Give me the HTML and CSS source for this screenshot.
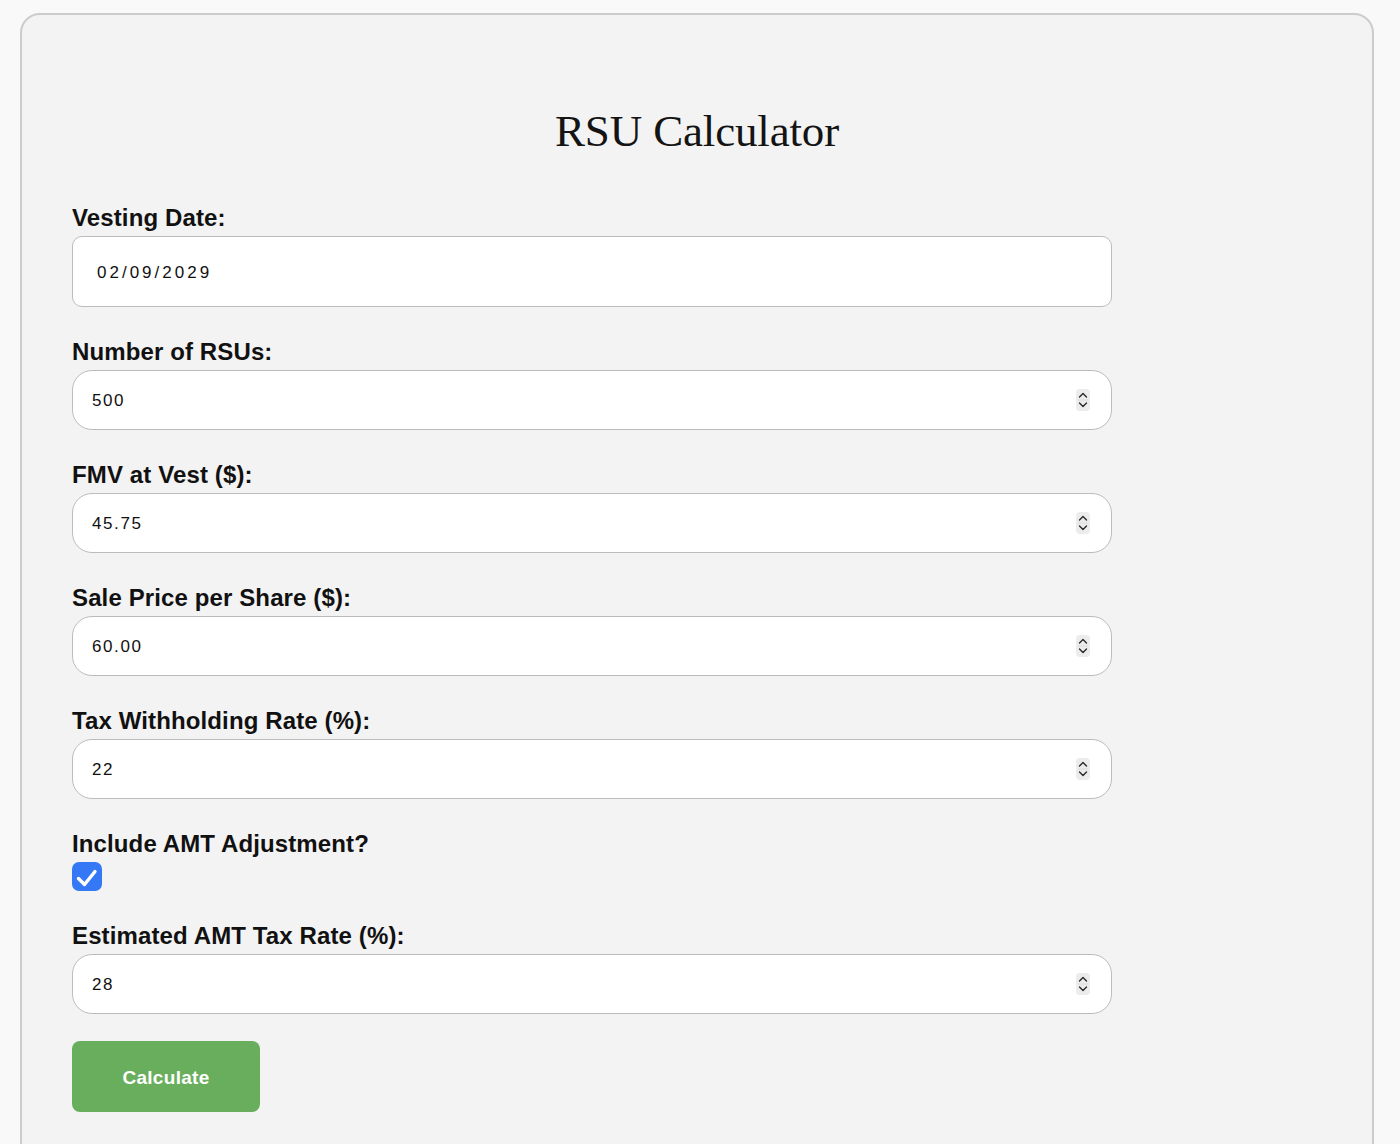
FILE: index.html
```html
<!DOCTYPE html>
<html lang="en">
<head>
<meta charset="utf-8">
<title>RSU Calculator</title>
<link rel="stylesheet" href="styles.css">
</head>
<body>
<div class="card">
  <h1>RSU Calculator</h1>
  <form class="calc" onsubmit="return false">
    <div class="field">
      <label for="vestDate">Vesting Date:</label>
      <input class="box date" id="vestDate" type="text" value="02/09/2029">
    </div>
    <div class="field">
      <label for="rsuCount">Number of RSUs:</label>
      <div class="num">
        <input class="box" id="rsuCount" type="number" value="500">
        <svg class="spin" width="14" height="22" viewBox="0 0 14 22"><rect width="14" height="22" rx="4" fill="#ececec"/><line x1="2" y1="11" x2="12" y2="11" stroke="#dcdcdc"/><path d="M3.5 8 L7 4.5 L10.5 8 M3.5 14 L7 17.5 L10.5 14" fill="none" stroke="#2a2a2a" stroke-width="1.4" stroke-linecap="round" stroke-linejoin="round"/></svg>
      </div>
    </div>
    <div class="field">
      <label for="fmv">FMV at Vest ($):</label>
      <div class="num">
        <input class="box" id="fmv" type="number" value="45.75">
        <svg class="spin" width="14" height="22" viewBox="0 0 14 22"><rect width="14" height="22" rx="4" fill="#ececec"/><line x1="2" y1="11" x2="12" y2="11" stroke="#dcdcdc"/><path d="M3.5 8 L7 4.5 L10.5 8 M3.5 14 L7 17.5 L10.5 14" fill="none" stroke="#2a2a2a" stroke-width="1.4" stroke-linecap="round" stroke-linejoin="round"/></svg>
      </div>
    </div>
    <div class="field">
      <label for="salePrice">Sale Price per Share ($):</label>
      <div class="num">
        <input class="box" id="salePrice" type="number" value="60.00">
        <svg class="spin" width="14" height="22" viewBox="0 0 14 22"><rect width="14" height="22" rx="4" fill="#ececec"/><line x1="2" y1="11" x2="12" y2="11" stroke="#dcdcdc"/><path d="M3.5 8 L7 4.5 L10.5 8 M3.5 14 L7 17.5 L10.5 14" fill="none" stroke="#2a2a2a" stroke-width="1.4" stroke-linecap="round" stroke-linejoin="round"/></svg>
      </div>
    </div>
    <div class="field">
      <label for="taxRate">Tax Withholding Rate (%):</label>
      <div class="num">
        <input class="box" id="taxRate" type="number" value="22">
        <svg class="spin" width="14" height="22" viewBox="0 0 14 22"><rect width="14" height="22" rx="4" fill="#ececec"/><line x1="2" y1="11" x2="12" y2="11" stroke="#dcdcdc"/><path d="M3.5 8 L7 4.5 L10.5 8 M3.5 14 L7 17.5 L10.5 14" fill="none" stroke="#2a2a2a" stroke-width="1.4" stroke-linecap="round" stroke-linejoin="round"/></svg>
      </div>
    </div>
    <div class="field">
      <label for="amt">Include AMT Adjustment?</label>
      <span class="check">
        <input id="amt" type="checkbox" checked>
        <svg class="tick" width="30" height="29" viewBox="0 0 30 29"><path d="M6.5 16.5 L12.5 22.5 L23 9.5" fill="none" stroke="#fff" stroke-width="3.4" stroke-linecap="round" stroke-linejoin="round"/></svg>
      </span>
    </div>
    <div class="field">
      <label for="amtRate">Estimated AMT Tax Rate (%):</label>
      <div class="num">
        <input class="box" id="amtRate" type="number" value="28">
        <svg class="spin" width="14" height="22" viewBox="0 0 14 22"><rect width="14" height="22" rx="4" fill="#ececec"/><line x1="2" y1="11" x2="12" y2="11" stroke="#dcdcdc"/><path d="M3.5 8 L7 4.5 L10.5 8 M3.5 14 L7 17.5 L10.5 14" fill="none" stroke="#2a2a2a" stroke-width="1.4" stroke-linecap="round" stroke-linejoin="round"/></svg>
      </div>
    </div>
    <button class="btn" type="submit">Calculate</button>
  </form>
</div>
</body>
</html>
```

FILE: styles.css
```css
body {
  margin: 0;
  background: #f9f9f9;
  font-family: "Liberation Sans", Arial, sans-serif;
  color: #111;
}

.card {
  margin: 13px 26px 0 20px;
  padding: 50px 50px 60px;
  background: #f3f3f3;
  border: 2px solid #cccccc;
  border-radius: 20px;
}

h1 {
  margin: 39px 0 44px;
  text-align: center;
  font-family: "Liberation Serif", "Times New Roman", serif;
  font-weight: normal;
  font-size: 45px;
  line-height: 54px;
  letter-spacing: -0.15px;
  color: #141414;
}

.calc {
  width: 1040px;
}

.field {
  margin-bottom: 29px;
}
.field:last-of-type {
  margin-bottom: 27px;
}

.field label {
  display: block;
  padding-top: 2px;
  margin-bottom: 4px;
  font-size: 24px;
  line-height: 28px;
  font-weight: bold;
  letter-spacing: 0.12px;
  color: #111;
}

.box {
  display: block;
  box-sizing: border-box;
  width: 100%;
  height: 60px;
  margin: 0;
  padding: 2px 19px 0;
  background: #fff;
  border: 1px solid #bcbcbc;
  border-radius: 20px;
  font-family: "Liberation Sans", Arial, sans-serif;
  font-size: 17px;
  letter-spacing: 1.6px;
  color: #111;
  outline: none;
  -moz-appearance: textfield;
}
.box::-webkit-inner-spin-button,
.box::-webkit-outer-spin-button {
  -webkit-appearance: none;
  margin: 0;
}

.box.date {
  height: 71px;
  padding: 2px 24px 0;
  border-radius: 10px;
  letter-spacing: 3px;
}

.num {
  position: relative;
}
.spin {
  position: absolute;
  right: 22px;
  top: 19px;
}

.check {
  position: relative;
  display: block;
  width: 30px;
  height: 29px;
  margin-top: 1px;
}
.check input {
  -webkit-appearance: none;
  appearance: none;
  display: block;
  width: 30px;
  height: 29px;
  margin: 0;
  background: #3478f6;
  border-radius: 7px;
}
.check .tick {
  position: absolute;
  left: 0;
  top: 0;
  pointer-events: none;
}

.btn {
  display: block;
  width: 188px;
  height: 71px;
  padding: 2px 0 0;
  background: #68ae5c;
  border: none;
  border-radius: 8px;
  color: #fff;
  font-family: "Liberation Sans", Arial, sans-serif;
  font-weight: bold;
  font-size: 19px;
  letter-spacing: 0.3px;
  cursor: pointer;
}
```
